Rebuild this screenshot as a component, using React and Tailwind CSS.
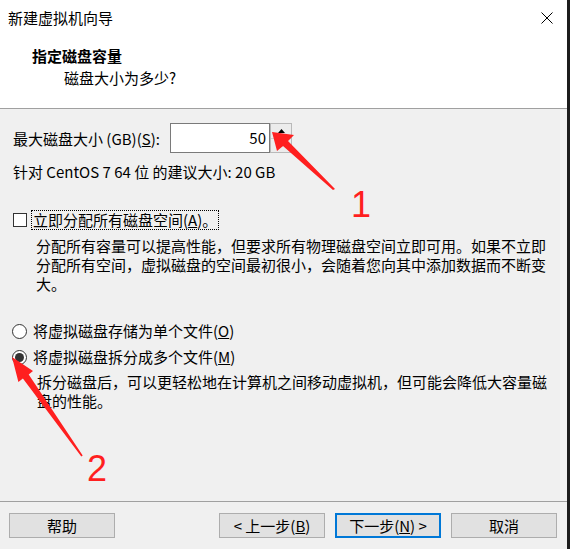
import { useState } from "react";

function Radio({ checked }) {
  return (
    <span className="flex h-[15px] w-[15px] shrink-0 items-center justify-center rounded-full border border-[#333] bg-white">
      {checked && <span className="h-[9px] w-[9px] rounded-full bg-[#333]" />}
    </span>
  );
}

function Btn({ children, primary }) {
  return (
    <button
      type="button"
      className={
        primary
          ? "h-[25px] w-[106px] border-2 border-[#0078d7] bg-[#e1e1e1] text-[15px] leading-[18px]"
          : "h-[25px] w-[106px] border border-[#adadad] bg-[#e1e1e1] text-[15px] leading-[18px]"
      }
    >
      {children}
    </button>
  );
}

export default function App() {
  const [size] = useState(50);
  const [split] = useState(true);

  return (
    <div className="relative flex h-[549px] w-[570px] overflow-hidden bg-[#f0f0f0] font-['Noto_Sans_CJK_SC',sans-serif] text-[15px] text-black">
      <div className="flex w-[567px] flex-col">
        <header className="h-[109px] border-b border-[#a0a0a0] bg-white">
          <div className="flex h-[36px] items-center justify-between pl-[8px] pr-[14px]">
            <span className="leading-[20px]">新建虚拟机向导</span>
            <svg width="12" height="12" viewBox="0 0 12 12">
              <path d="M0.5 0.5 L11.5 11.5 M11.5 0.5 L0.5 11.5" stroke="#000" strokeWidth="1" />
            </svg>
          </div>
          <div className="pl-[32px] pt-[10px] font-bold leading-[20px]">指定磁盘容量</div>
          <div className="pl-[64px] pt-[2px] leading-[20px]">磁盘大小为多少?</div>
        </header>

        <main className="flex-1 pl-[13px] pt-[14px]">
          <div className="flex h-[30px] items-center">
            <span className="w-[157px] pt-[2px] leading-[20px]">
              最大磁盘大小 (GB)(<span className="underline">S</span>):
            </span>
            <div className="flex h-[30px] w-[100px] items-center justify-end border border-[#7a7a7a] bg-white pr-[3px] leading-[20px]">
              {size}
            </div>
            <div className="flex h-[30px] w-[22px] flex-col border border-[#b9b9b9] bg-[#ececec]">
              <div className="flex flex-1 items-center justify-center border-b border-[#cfcfcf]">
                <svg width="7" height="4" viewBox="0 0 7 4">
                  <path d="M0 4 L3.5 0 L7 4 Z" fill="#000" />
                </svg>
              </div>
              <div className="flex flex-1 items-center justify-center">
                <svg width="7" height="4" viewBox="0 0 7 4">
                  <path d="M0 0 L3.5 4 L7 0 Z" fill="#000" />
                </svg>
              </div>
            </div>
          </div>

          <p className="mt-[9px] leading-[20px]">针对 CentOS 7 64 位 的建议大小: 20 GB</p>

          <div className="mt-[28px] flex items-center">
            <span className="h-[14px] w-[14px] shrink-0 border border-[#333] bg-white" />
            <span className="ml-[4px] border border-dotted border-black px-[1px] leading-[18px]">
              立即分配所有磁盘空间(<span className="underline">A</span>)。
            </span>
          </div>
          <div className="ml-[23px] mt-[6px] leading-[19px]">
            <div>分配所有容量可以提高性能，但要求所有物理磁盘空间立即可用。如果不立即</div>
            <div>分配所有空间，虚拟磁盘的空间最初很小，会随着您向其中添加数据而不断变</div>
            <div>大。</div>
          </div>

          <div className="ml-[-1px] mt-[28px] flex h-[20px] items-center gap-[6px]">
            <Radio checked={!split} />
            <span className="leading-[20px]">
              将虚拟磁盘存储为单个文件(<span className="underline">O</span>)
            </span>
          </div>
          <div className="ml-[-1px] mt-[6px] flex h-[20px] items-center gap-[6px]">
            <Radio checked={split} />
            <span className="leading-[20px]">
              将虚拟磁盘拆分成多个文件(<span className="underline">M</span>)
            </span>
          </div>
          <div className="ml-[24px] mt-[5px] leading-[19px]">
            <div>拆分磁盘后，可以更轻松地在计算机之间移动虚拟机，但可能会降低大容量磁</div>
            <div>盘的性能。</div>
          </div>
        </main>

        <footer className="flex h-[48px] items-start border-t border-[#a0a0a0] pl-[9px] pr-[10px] pt-[11px]">
          <Btn>帮助</Btn>
          <div className="ml-auto flex gap-[10px]">
            <Btn>&lt; 上一步(<span className="underline">B</span>)</Btn>
            <Btn primary>
              下一步(<span className="underline">N</span>) &gt;
            </Btn>
            <Btn>取消</Btn>
          </div>
        </footer>
      </div>
      <div className="w-[3px] bg-[#1c1c1c]" />

      <div className="pointer-events-none absolute inset-0">
        <svg width="570" height="549" viewBox="0 0 570 549" className="absolute left-0 top-0">
          <polygon points="272,132 294,135 288,141 335,189 333,190 283,146 277,151" fill="#ff1f1f" />
          <polygon points="12,357 33,371 28.7,374.6 82.7,455.5 81.3,456.5 22.9,378.6 18.4,382" fill="#ff1f1f" />
        </svg>
        <span className="absolute left-[351px] top-[187px] font-['Liberation_Sans',sans-serif] text-[36px] leading-none text-[#ff1f1f]">
          1
        </span>
        <span className="absolute left-[87px] top-[451px] font-['Liberation_Sans',sans-serif] text-[36px] leading-none text-[#ff1f1f]">
          2
        </span>
      </div>
    </div>
  );
}
